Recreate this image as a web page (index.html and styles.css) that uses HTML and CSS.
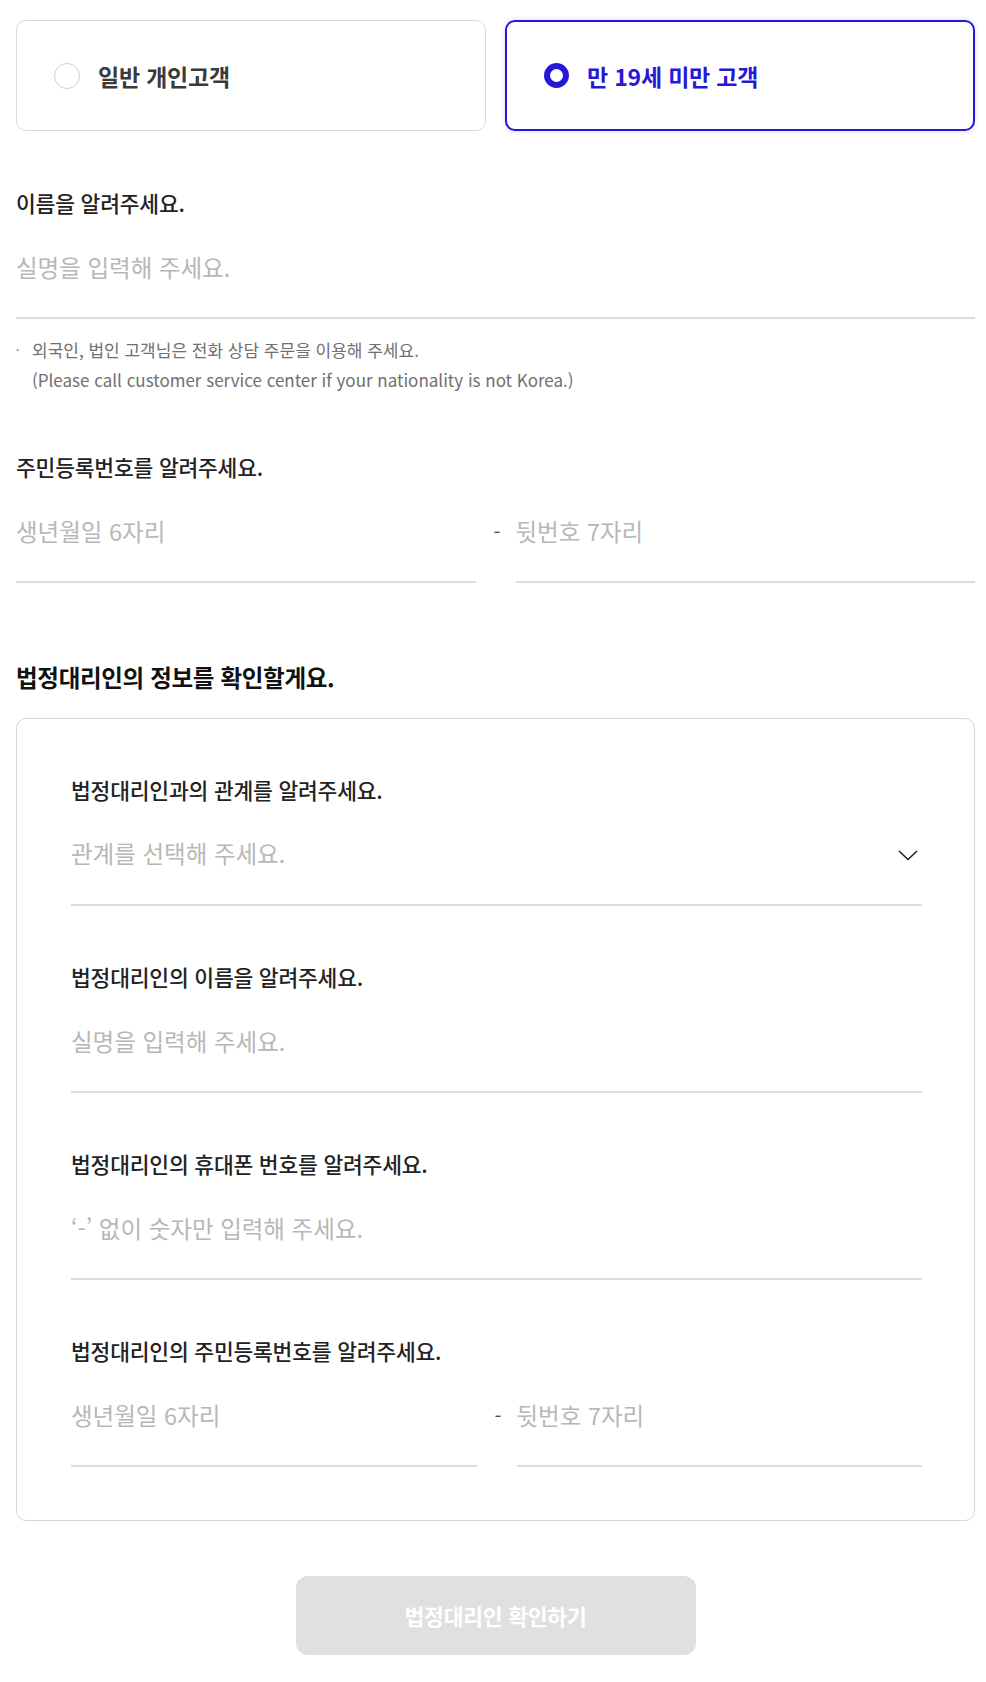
FILE: index.html
```html
<!DOCTYPE html>
<html lang="ko">
<head>
<meta charset="utf-8">
<title>법정대리인 정보 입력</title>
<link rel="stylesheet" href="styles.css">
</head>
<body>
<main class="page">
  <div class="type-select">
    <label class="type-card">
      <span class="radio"></span>
      <span class="type-text">일반 개인고객</span>
    </label>
    <label class="type-card is-active">
      <span class="radio"></span>
      <span class="type-text">만 19세 미만 고객</span>
    </label>
  </div>

  <div class="field field-first">
    <div class="field-label">이름을 알려주세요.</div>
    <input class="text-input" type="text" placeholder="실명을 입력해 주세요.">
  </div>
  <div class="note">
    <span class="note-bullet">·</span>
    <p class="note-text">외국인, 법인 고객님은 전화 상담 주문을 이용해 주세요.<br>(Please call customer service center if your nationality is not Korea.)</p>
  </div>

  <div class="field field-after-note">
    <div class="field-label">주민등록번호를 알려주세요.</div>
    <div class="rrn-row">
      <input class="text-input" type="text" placeholder="생년월일 6자리">
      <span class="rrn-dash">-</span>
      <input class="text-input" type="text" placeholder="뒷번호 7자리">
    </div>
  </div>

  <h2 class="section-title">법정대리인의 정보를 확인할게요.</h2>

  <section class="guardian-box">
    <div class="field">
      <div class="field-label">법정대리인과의 관계를 알려주세요.</div>
      <div class="select-input">
        <span class="select-placeholder">관계를 선택해 주세요.</span>
        <svg class="chevron" width="20" height="11" viewBox="0 0 20 11" aria-hidden="true"><path d="M1 1 L10 9.5 L19 1" fill="none" stroke="#222" stroke-width="1.6"/></svg>
      </div>
    </div>
    <div class="field">
      <div class="field-label">법정대리인의 이름을 알려주세요.</div>
      <input class="text-input" type="text" placeholder="실명을 입력해 주세요.">
    </div>
    <div class="field">
      <div class="field-label">법정대리인의 휴대폰 번호를 알려주세요.</div>
      <input class="text-input" type="text" placeholder="‘-’ 없이 숫자만 입력해 주세요.">
    </div>
    <div class="field">
      <div class="field-label">법정대리인의 주민등록번호를 알려주세요.</div>
      <div class="rrn-row">
        <input class="text-input" type="text" placeholder="생년월일 6자리">
        <span class="rrn-dash">-</span>
        <input class="text-input" type="text" placeholder="뒷번호 7자리">
      </div>
    </div>
  </section>

  <div class="actions">
    <button class="confirm-btn" type="button" disabled>법정대리인 확인하기</button>
  </div>
</main>
</body>
</html>
```

FILE: styles.css
```css
* {
  box-sizing: border-box;
}

html, body {
  margin: 0;
  padding: 0;
  background: #ffffff;
}

body {
  font-family: "Noto Sans CJK KR", "Noto Sans", sans-serif;
  color: #222222;
}

.page {
  width: 959px;
  margin-left: 16px;
  padding-top: 20px;
}

/* customer type cards */
.type-select {
  display: grid;
  grid-template-columns: 1fr 1fr;
  gap: 19px;
}

.type-card {
  display: flex;
  align-items: center;
  gap: 18px;
  height: 111px;
  padding-left: 37px;
  border: 1.5px solid #d9d9d9;
  border-radius: 10px;
  background: #fff;
  cursor: pointer;
}

.radio {
  width: 26px;
  height: 26px;
  border: 1.5px solid #cfcfcf;
  border-radius: 50%;
  flex: none;
  background: #fff;
}

.type-text {
  font-size: 23px;
  font-weight: 700;
  color: #3a3a3a;
  letter-spacing: -0.2px;
}

.type-card.is-active {
  border: 2px solid #2618d9;
  box-shadow: 0 0 5px rgba(38, 24, 217, 0.18);
}

.type-card.is-active .radio {
  width: 25px;
  height: 25px;
  border: 6.5px solid #2618d9;
}

.type-card.is-active .type-text {
  color: #2618d9;
}

/* fields */
.field-first {
  margin-top: 58px;
}

.field-after-note {
  margin-top: 58px;
}

.field-label {
  font-size: 21.5px;
  line-height: 28px;
  font-weight: 500;
  color: #222222;
  letter-spacing: -0.2px;
}

.text-input {
  display: block;
  width: 100%;
  height: 102px;
  margin: 0;
  padding: 0;
  border: none;
  border-bottom: 2px solid #dcdcdc;
  border-radius: 0;
  outline: none;
  background: transparent;
  font-family: inherit;
  font-size: 23.5px;
  color: #222;
}

.text-input::placeholder {
  color: #b7b7b7;
  opacity: 1;
}

.select-input {
  display: flex;
  align-items: center;
  justify-content: space-between;
  height: 102px;
  border-bottom: 2px solid #dcdcdc;
  padding-bottom: 2px;
}

.select-placeholder {
  font-size: 23.5px;
  color: #b7b7b7;
}

.chevron {
  margin-right: 4px;
  margin-top: 4px;
}

.rrn-row {
  display: grid;
  grid-template-columns: 1fr 40px 1fr;
  align-items: center;
}

.rrn-dash {
  text-align: center;
  font-size: 20px;
  color: #555;
  padding-bottom: 2px;
  padding-left: 3px;
}

/* note */
.note {
  display: flex;
  margin-top: 16px;
  color: #707070;
  font-size: 17px;
  line-height: 30px;
}

.note-bullet {
  width: 16px;
  flex: none;
  font-size: 12px;
}

.note-text {
  margin: 0;
}

/* section */
.section-title {
  margin: 79px 0 0;
  font-size: 23.5px;
  line-height: 30px;
  font-weight: 700;
  color: #111111;
  letter-spacing: -0.3px;
}

.guardian-box {
  margin-top: 26px;
  border: 1.5px solid #d6d6d6;
  border-radius: 10px;
  padding: 57px 52px 53px 54px;
}

.guardian-box .field + .field {
  margin-top: 57px;
}

/* button */
.actions {
  display: flex;
  justify-content: center;
  margin-top: 55px;
}

.confirm-btn {
  width: 400px;
  height: 79px;
  border: none;
  border-radius: 12px;
  background: #e0e0e0;
  color: #ffffff;
  font-family: inherit;
  font-size: 21.5px;
  font-weight: 700;
  letter-spacing: -0.2px;
}
```
